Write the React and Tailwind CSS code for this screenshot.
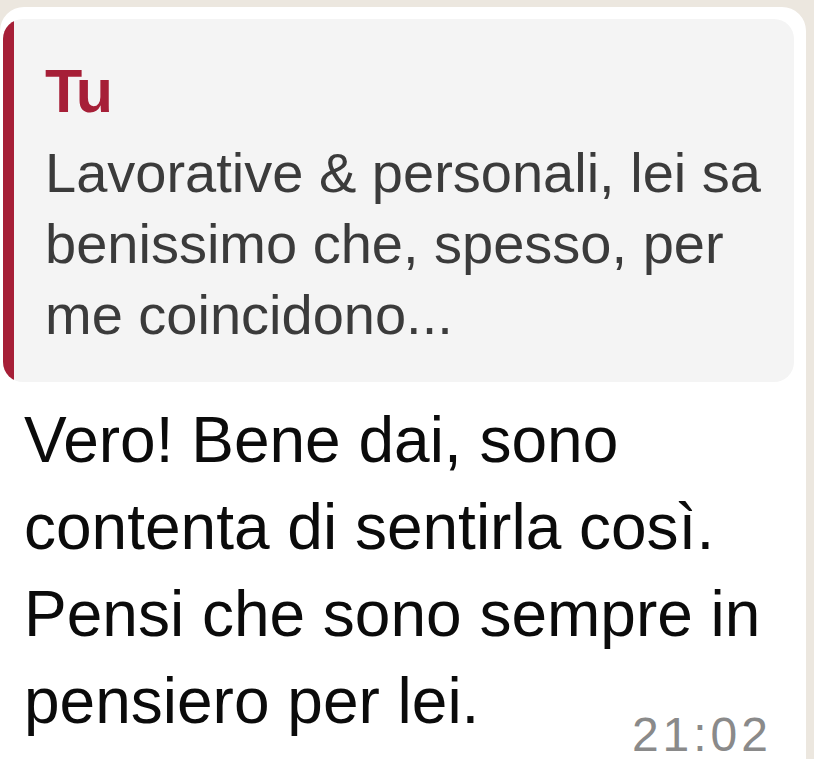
import React from 'react';

const quoteLines = [
  'Lavorative & personali, lei sa',
  'benissimo che, spesso, per',
  'me coincidono...',
];

const messageLines = [
  'Vero! Bene dai, sono',
  'contenta di sentirla così.',
  'Pensi che sono sempre in',
];

function App() {
  return (
    <div className="w-[814px] h-[759px] overflow-hidden bg-[#ece7df] font-['Liberation_Sans',Arial,sans-serif]">
      <div className="mt-[7px] w-[806px] rounded-[24px] bg-white pl-[3px] pr-[12px] pt-[12px] pb-[40px]">
        {/* Quoted reply */}
        <div className="flex overflow-hidden rounded-[20px] bg-[#f4f4f4]">
          <div className="w-[11px] shrink-0 bg-[#a61f37]" />
          <div className="pl-[31px] pt-[40px] pb-[32px]">
            <div className="text-[61px] leading-[64px] font-bold tracking-[-2px] text-[#a61f37]">Tu</div>
            <div className="mt-[14px] text-[56px] leading-[71px] text-[#3b3b3b]">
              {quoteLines.map((line) => (
                <div key={line} className="whitespace-nowrap">{line}</div>
              ))}
            </div>
          </div>
        </div>

        {/* Message body */}
        <div className="mt-[15px] pl-[21px] text-[64px] leading-[87px] text-[#0b0b0b]">
          {messageLines.map((line) => (
            <div key={line} className="whitespace-nowrap">{line}</div>
          ))}
          <div className="flex items-end justify-between">
            <span className="whitespace-nowrap pb-[7px]">pensiero per lei.</span>
            <span className="mr-[22px] text-[48px] leading-[34px] tracking-[4px] text-[#8a8a8a]">21:02</span>
          </div>
        </div>
      </div>
    </div>
  );
}

export default App;
